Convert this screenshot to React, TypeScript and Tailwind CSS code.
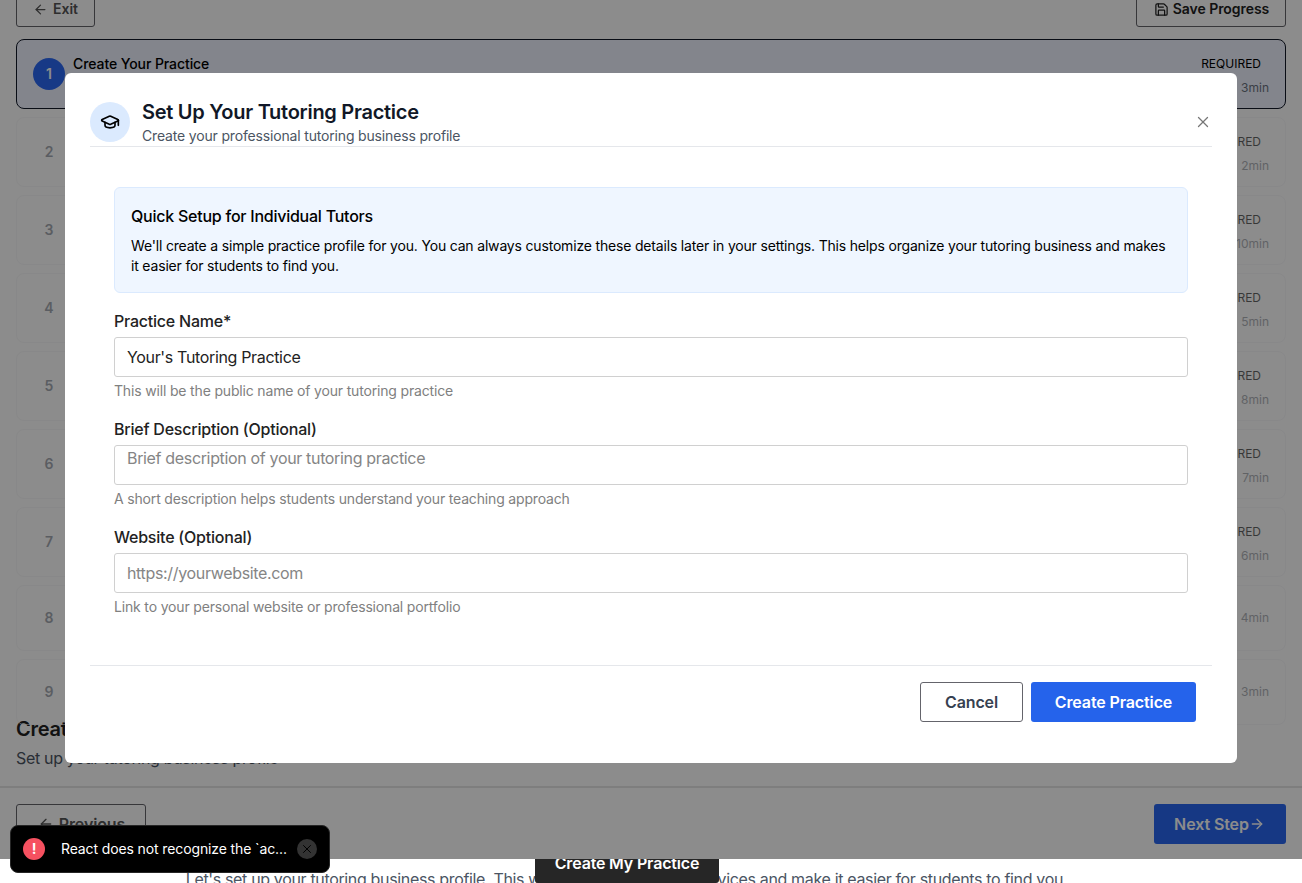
import { ArrowLeft, ArrowRight, GraduationCap, Save, X } from "lucide-react";

const steps = [
  { n: 2, time: "2min", required: true },
  { n: 3, time: "10min", required: true },
  { n: 4, time: "5min", required: true },
  { n: 5, time: "8min", required: true },
  { n: 6, time: "7min", required: true },
  { n: 7, time: "6min", required: true },
  { n: 8, time: "4min", required: false },
  { n: 9, time: "3min", required: false },
];

function Field({ label, hint, value, placeholder, multiline }: { label: string; hint: string; value?: string; placeholder?: string; multiline?: boolean }) {
  const box = "block h-10 w-full resize-none overflow-hidden rounded-[3px] border border-[#d0d0d0] bg-white px-3 text-base tracking-[-0.34px] text-[#222] outline-none placeholder:text-[#858585]";
  return (
    <div className="h-[108px]">
      <label className="block h-6 text-base leading-6 font-medium tracking-[-0.22px] text-[#222]">{label}</label>
      <div className="mt-1">
        {multiline ? (
          <textarea className={`${box} py-0 leading-6`} placeholder={placeholder} />
        ) : (
          <input className={box} defaultValue={value} placeholder={placeholder} />
        )}
      </div>
      <p className="mt-1 text-sm leading-5 tracking-[-0.167px] text-[#808080]">{hint}</p>
    </div>
  );
}

function Background() {
  return (
    <div className="flex h-full flex-col">
      <div className="flex h-[27px] shrink-0 items-end justify-between px-4">
        <button className="flex h-9 w-[79px] items-center justify-center gap-[5px] rounded-[3px] border border-[#64646b] text-sm font-semibold text-[#555]">
          <ArrowLeft size={15} />
          Exit
        </button>
        <button className="flex h-9 w-[150px] items-center justify-center gap-1 rounded-[3px] border border-[#64646b] pl-px text-sm font-semibold tracking-[-0.05px] text-[#222]">
          <Save size={15} />
          Save Progress
        </button>
      </div>

      <div className="mx-4 mt-3 flex h-[70px] shrink-0 rounded-lg border border-[#111827] bg-[#eff2ff] px-4">
        <div className="mt-[18px] flex size-8 items-center justify-center rounded-full bg-[#2b68f4] text-sm font-semibold text-white">1</div>
        <p className="mt-3.5 ml-2 grow text-sm leading-5 font-medium tracking-[-0.08px] text-black">Create Your Practice</p>
        <div className="mt-3 flex flex-col items-end">
          <span className="mr-2 text-xs leading-6 text-black">REQUIRED</span>
          <span className="text-xs leading-6 text-[#6b7280]">3min</span>
        </div>
      </div>

      <div className="mx-4 mt-2 flex shrink-0 flex-col gap-2">
        {steps.map((s) => (
          <div
            key={s.n}
            className={`flex justify-between rounded-lg border border-[#f3f4f6] px-4 opacity-60 ${s.required ? "h-[70px]" : "h-[66px]"}`}
          >
            <span className="flex w-8 items-center justify-center text-sm font-semibold text-[#6b7280]">{s.n}</span>
            <div className={`flex flex-col items-end justify-center ${s.required ? "pt-1" : ""}`}>
              {s.required && <span className="mr-2 text-xs leading-6 text-black">REQUIRED</span>}
              <span className="text-xs leading-6 text-[#7d828b]">{s.time}</span>
            </div>
          </div>
        ))}
      </div>

      <div className="-mt-2.5 h-[71px] shrink-0 px-4">
        <h2 className="text-xl leading-7 font-semibold tracking-[-0.27px] text-[#222]">Create Your Practice</h2>
        <p className="mt-px text-base leading-7 tracking-[-0.33px] text-[#4b5563]">Set up your tutoring business profile</p>
      </div>
      <div className="flex grow items-start justify-between border-t-2 border-[#e5e5e5] px-4 pt-4">
        <button className="flex h-10 w-[130px] items-center justify-center gap-[5px] rounded-[3px] border border-[#64646b] pl-px text-base font-semibold tracking-[-0.12px] text-[#555]">
          <ArrowLeft size={16} />
          Previous
        </button>
        <button className="flex h-10 w-[132px] items-center justify-center rounded-[3px] bg-[#2866f0] pr-px text-base font-semibold tracking-[-0.1px] text-white">
          Next Step
          <ArrowRight size={16} />
        </button>
      </div>
    </div>
  );
}

export default function App() {
  return (
    <div className="relative h-[883px] w-[1302px] overflow-hidden bg-white font-['Inter',sans-serif]">
      <div className="relative h-[859px] overflow-hidden">
        <Background />
        <div className="absolute inset-0 bg-black/45" />
      </div>

      <div className="relative flex h-6 justify-center overflow-hidden">
        <p className="mt-1.5 ml-[-49px] text-base leading-7 tracking-[-0.342px] whitespace-nowrap text-[#4b5563]">
          Let's set up your tutoring business profile. This will help organize your services and make it easier for students to find you.
        </p>
        <button className="absolute top-[-16px] left-[535px] h-10 w-[184px] rounded-[3px] bg-[#262626] text-base font-semibold tracking-[-0.17px] text-white">
          Create My Practice
        </button>
      </div>

      <div className="absolute top-[73px] left-[65px] flex h-[690px] w-[1172px] flex-col rounded-md bg-white px-[25px]">
        <header className="flex h-[74px] items-start border-b border-[#e5e7eb]">
          <div className="mt-[29px] flex size-10 shrink-0 items-center justify-center rounded-full bg-[#dbeafe] text-black">
            <GraduationCap size={20} />
          </div>
          <div className="mt-[25px] ml-3 grow">
            <h1 className="text-xl leading-7 font-semibold tracking-[-0.27px] text-[#111827]">Set Up Your Tutoring Practice</h1>
            <p className="text-sm leading-5 tracking-[-0.167px] text-[#4b5563]">Create your professional tutoring business profile</p>
          </div>
          <button className="mt-10 text-[#777]" aria-label="Close">
            <X size={18} strokeWidth={1.7} />
          </button>
        </header>

        <main className="px-6 pt-10">
          <section className="h-[106px] rounded-md border border-[#dbeafe] bg-[#eff6ff] px-4 pt-4 text-black">
            <h2 className="text-base leading-6 font-medium tracking-[-0.24px]">Quick Setup for Individual Tutors</h2>
            <p className="mt-2 text-sm leading-5 tracking-[-0.18px]">
              We'll create a simple practice profile for you. You can always customize these details later in your settings. This helps organize your tutoring business and makes it easier for students to find you.
            </p>
          </section>
          <div className="mt-4">
            <Field label="Practice Name*" value="Your's Tutoring Practice" hint="This will be the public name of your tutoring practice" />
            <Field label="Brief Description (Optional)" placeholder="Brief description of your tutoring practice" hint="A short description helps students understand your teaching approach" multiline />
            <Field label="Website (Optional)" placeholder="https://yourwebsite.com" hint="Link to your personal website or professional portfolio" />
          </div>
        </main>

        <footer className="mt-8 flex justify-end gap-2 border-t border-[#e5e7eb] pt-4 pr-4">
          <button className="h-10 w-[103px] rounded-[3px] border border-[#64646b] text-base font-semibold tracking-[-0.12px] text-[#374151]">Cancel</button>
          <button className="h-10 w-[165px] rounded-[3px] bg-[#2563eb] text-base font-semibold tracking-[-0.12px] text-white">Create Practice</button>
        </footer>
      </div>

      <div className="absolute top-[825px] left-[10px] flex h-12 w-80 items-center rounded-lg border border-[#262626] bg-black px-3 text-white">
        <span className="flex size-[22px] items-center justify-center rounded-full bg-[#f65160] text-sm font-bold">!</span>
        <span className="ml-4 w-[236px] text-sm tracking-[-0.12px] whitespace-nowrap">React does not recognize the `ac...</span>
        <span className="flex size-5 items-center justify-center rounded-full bg-[#333] text-black">
          <X size={14} strokeWidth={1.7} />
        </span>
      </div>
    </div>
  );
}
